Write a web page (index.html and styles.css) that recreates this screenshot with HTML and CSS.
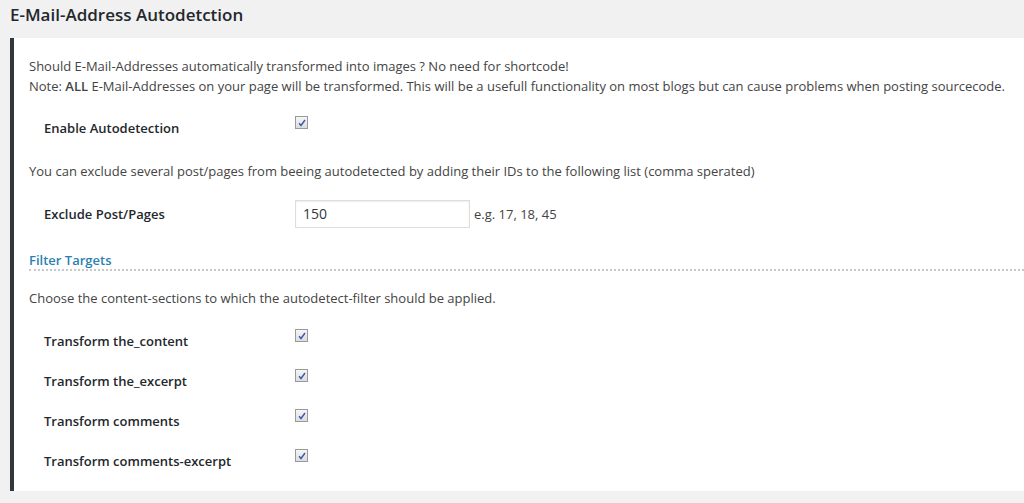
FILE: index.html
```html
<!DOCTYPE html>
<html>
<head>
<meta charset="utf-8">
<link rel="stylesheet" href="styles.css">
</head>
<body>
<h2 class="title">E-Mail-Address Autodetction</h2>
<div class="panel">
  <p class="text">Should E-Mail-Addresses automatically transformed into images ? No need for shortcode!<br>Note: <b>ALL</b> E-Mail-Addresses on your page will be transformed. This will be a usefull functionality on most blogs but can cause problems when posting sourcecode.</p>
  <div class="row row-first">
    <span class="label">Enable Autodetection</span>
    <span class="check"><svg width="12" height="12" viewBox="0 0 12 12"><path d="M2.5 6.2 L4.8 9 L9.6 2.4" fill="none" stroke="#3b5fb0" stroke-width="1.8"/></svg></span>
  </div>
  <p class="text text-exclude">You can exclude several post/pages from beeing autodetected by adding their IDs to the following list (comma sperated)</p>
  <div class="row row-input">
    <span class="label">Exclude Post/Pages</span>
    <span class="field">150</span>
    <span class="hint">e.g. 17, 18, 45</span>
  </div>
  <h3 class="section">Filter Targets</h3>
  <p class="text text-choose">Choose the content-sections to which the autodetect-filter should be applied.</p>
  <div class="row row-first2">
    <span class="label">Transform the_content</span>
    <span class="check"><svg width="12" height="12" viewBox="0 0 12 12"><path d="M2.5 6.2 L4.8 9 L9.6 2.4" fill="none" stroke="#3b5fb0" stroke-width="1.8"/></svg></span>
  </div>
  <div class="row row-next">
    <span class="label">Transform the_excerpt</span>
    <span class="check"><svg width="12" height="12" viewBox="0 0 12 12"><path d="M2.5 6.2 L4.8 9 L9.6 2.4" fill="none" stroke="#3b5fb0" stroke-width="1.8"/></svg></span>
  </div>
  <div class="row row-next">
    <span class="label">Transform comments</span>
    <span class="check"><svg width="12" height="12" viewBox="0 0 12 12"><path d="M2.5 6.2 L4.8 9 L9.6 2.4" fill="none" stroke="#3b5fb0" stroke-width="1.8"/></svg></span>
  </div>
  <div class="row row-next">
    <span class="label">Transform comments-excerpt</span>
    <span class="check"><svg width="12" height="12" viewBox="0 0 12 12"><path d="M2.5 6.2 L4.8 9 L9.6 2.4" fill="none" stroke="#3b5fb0" stroke-width="1.8"/></svg></span>
  </div>
</div>
</body>
</html>
```

FILE: styles.css
```css
html, body {
  margin: 0;
  padding: 0;
  background: #f1f1f1;
  font-family: "Open Sans", "Liberation Sans", sans-serif;
  color: #444;
  font-size: 13px;
  line-height: 20px;
}
.title {
  margin: 0;
  padding: 2px 0 0 10px;
  height: 36px;
  font-size: 17px;
  font-weight: 600;
  line-height: 26px;
  color: #23282d;
}
.panel {
  margin-left: 10px;
  background: #fff;
  border-left: 4px solid #32373c;
  padding: 18px 0 20px 15px;
  box-shadow: 0 1px 1px rgba(0,0,0,0.06);
}
.text {
  margin: 0;
}
.text b { font-weight: 600; }
.row {
  display: flex;
  align-items: flex-start;
}
.label {
  box-sizing: border-box;
  flex: 0 0 266px;
  width: 266px;
  padding-left: 15px;
  font-weight: 600;
  color: #23282d;
}
.row-first { margin-top: 22px; }
.text-exclude { margin-top: 23px; }
.row-input { margin-top: 19px; line-height: 28px; align-items: center; }
.row-input .label { line-height: 28px; }
.field {
  box-sizing: border-box;
  width: 175px;
  height: 28px;
  border: 1px solid #ddd;
  box-shadow: inset 0 1px 2px rgba(0,0,0,0.07);
  padding: 0 7px;
  font-size: 14px;
  line-height: 26px;
  color: #32373c;
}
.hint {
  margin-left: 4px;
  line-height: 28px;
}
.section {
  margin: 23px 0 0 0;
  font-size: 13px;
  font-weight: 600;
  line-height: 18px;
  color: #2b7fb0;
  border-bottom: 2px dotted #c8c8c8;
}
.text-choose { margin-top: 17px; }
.row-first2 { margin-top: 23px; }
.row-next { margin-top: 20px; }
.check {
  box-sizing: border-box;
  width: 13px;
  height: 13px;
  margin-top: -2px;
  border: 1px solid #9a9a9a;
  background: linear-gradient(#f6f6f6, #dcdcdc);
  display: flex;
  align-items: center;
  justify-content: center;
}
.check svg { display: block; width: 10px; height: 10px; }
```
